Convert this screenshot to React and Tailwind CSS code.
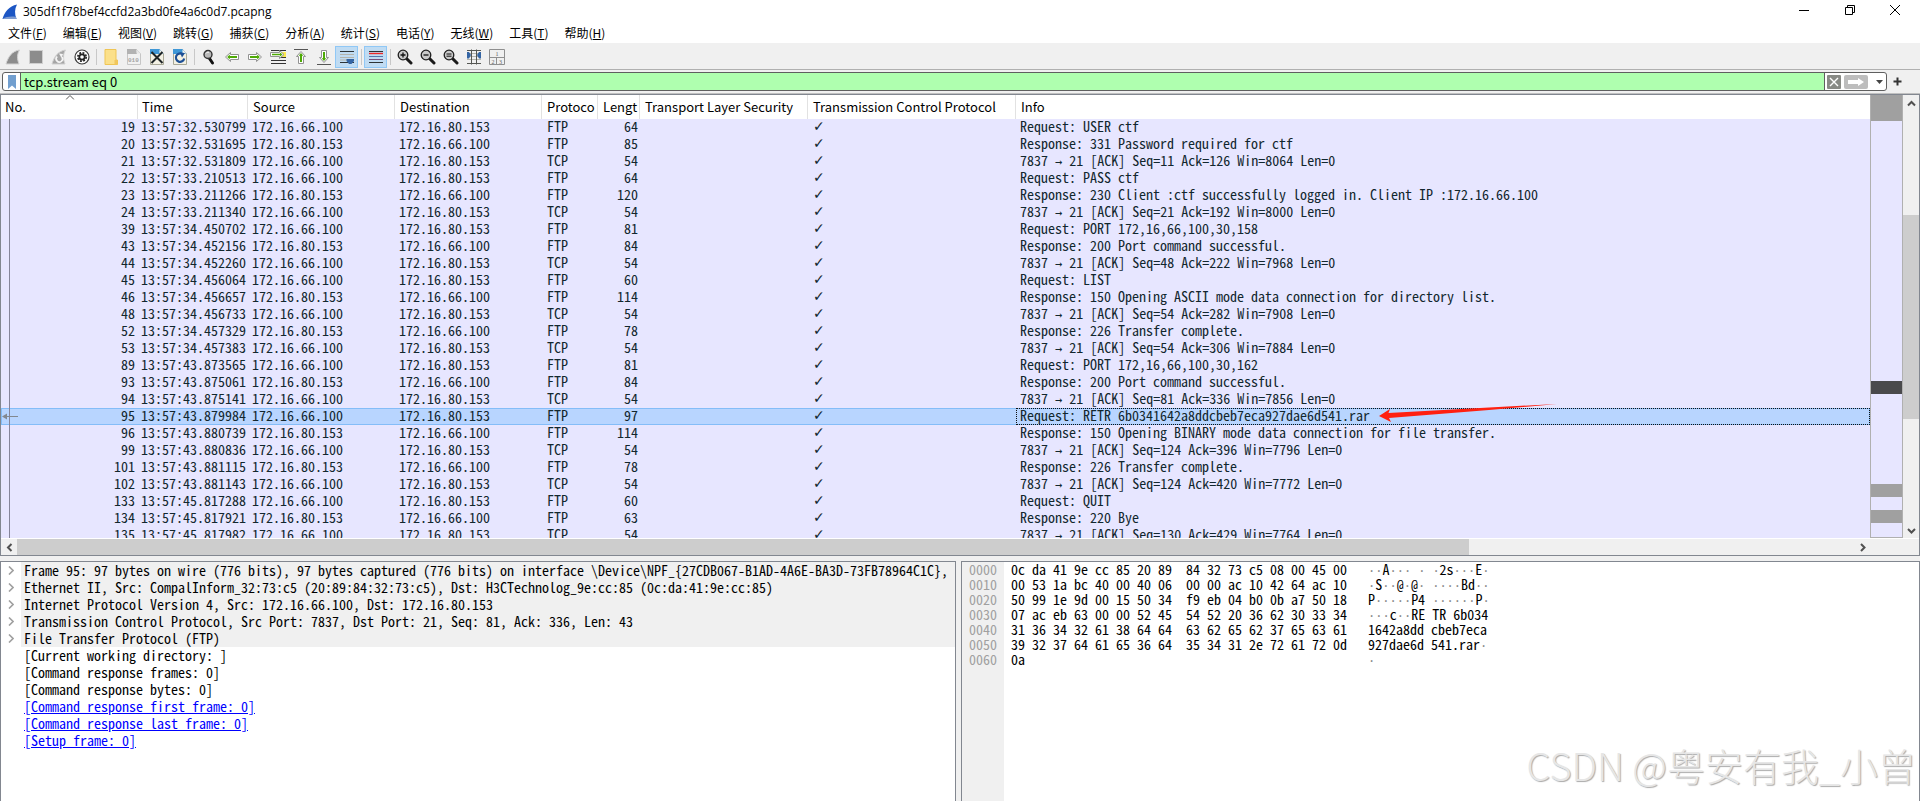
const MENUS = [
  ['文件', 'F'], ['编辑', 'E'], ['视图', 'V'], ['跳转', 'G'], ['捕获', 'C'], ['分析', 'A'],
  ['统计', 'S'], ['电话', 'Y'], ['无线', 'W'], ['工具', 'T'], ['帮助', 'H'],
]

const A = '172.16.66.100'
const B = '172.16.80.153'

// no, time, source, protocol, length, info
const PACKETS = [
  [19, '13:57:32.530799', A, 'FTP', 64, 'Request: USER ctf'],
  [20, '13:57:32.531695', B, 'FTP', 85, 'Response: 331 Password required for ctf'],
  [21, '13:57:32.531809', A, 'TCP', 54, '7837 → 21 [ACK] Seq=11 Ack=126 Win=8064 Len=0'],
  [22, '13:57:33.210513', A, 'FTP', 64, 'Request: PASS ctf'],
  [23, '13:57:33.211266', B, 'FTP', 120, 'Response: 230 Client :ctf successfully logged in. Client IP :172.16.66.100'],
  [24, '13:57:33.211340', A, 'TCP', 54, '7837 → 21 [ACK] Seq=21 Ack=192 Win=8000 Len=0'],
  [39, '13:57:34.450702', A, 'FTP', 81, 'Request: PORT 172,16,66,100,30,158'],
  [43, '13:57:34.452156', B, 'FTP', 84, 'Response: 200 Port command successful.'],
  [44, '13:57:34.452260', A, 'TCP', 54, '7837 → 21 [ACK] Seq=48 Ack=222 Win=7968 Len=0'],
  [45, '13:57:34.456064', A, 'FTP', 60, 'Request: LIST'],
  [46, '13:57:34.456657', B, 'FTP', 114, 'Response: 150 Opening ASCII mode data connection for directory list.'],
  [48, '13:57:34.456733', A, 'TCP', 54, '7837 → 21 [ACK] Seq=54 Ack=282 Win=7908 Len=0'],
  [52, '13:57:34.457329', B, 'FTP', 78, 'Response: 226 Transfer complete.'],
  [53, '13:57:34.457383', A, 'TCP', 54, '7837 → 21 [ACK] Seq=54 Ack=306 Win=7884 Len=0'],
  [89, '13:57:43.873565', A, 'FTP', 81, 'Request: PORT 172,16,66,100,30,162'],
  [93, '13:57:43.875061', B, 'FTP', 84, 'Response: 200 Port command successful.'],
  [94, '13:57:43.875141', A, 'TCP', 54, '7837 → 21 [ACK] Seq=81 Ack=336 Win=7856 Len=0'],
  [95, '13:57:43.879984', A, 'FTP', 97, 'Request: RETR 6b0341642a8ddcbeb7eca927dae6d541.rar'],
  [96, '13:57:43.880739', B, 'FTP', 114, 'Response: 150 Opening BINARY mode data connection for file transfer.'],
  [99, '13:57:43.880836', A, 'TCP', 54, '7837 → 21 [ACK] Seq=124 Ack=396 Win=7796 Len=0'],
  [101, '13:57:43.881115', B, 'FTP', 78, 'Response: 226 Transfer complete.'],
  [102, '13:57:43.881143', A, 'TCP', 54, '7837 → 21 [ACK] Seq=124 Ack=420 Win=7772 Len=0'],
  [133, '13:57:45.817288', A, 'FTP', 60, 'Request: QUIT'],
  [134, '13:57:45.817921', B, 'FTP', 63, 'Response: 220 Bye'],
  [135, '13:57:45.817982', A, 'TCP', 54, '7837 → 21 [ACK] Seq=130 Ack=429 Win=7764 Len=0'],
]
const SELECTED = 95

const LAYERS = [
  'Frame 95: 97 bytes on wire (776 bits), 97 bytes captured (776 bits) on interface \\Device\\NPF_{27CDB067-B1AD-4A6E-BA3D-73FB78964C1C},',
  'Ethernet II, Src: CompalInform_32:73:c5 (20:89:84:32:73:c5), Dst: H3CTechnolog_9e:cc:85 (0c:da:41:9e:cc:85)',
  'Internet Protocol Version 4, Src: 172.16.66.100, Dst: 172.16.80.153',
  'Transmission Control Protocol, Src Port: 7837, Dst Port: 21, Seq: 81, Ack: 336, Len: 43',
  'File Transfer Protocol (FTP)',
]
const FIELDS = ['[Current working directory: ]', '[Command response frames: 0]', '[Command response bytes: 0]']
const FRAME_LINKS = ['[Command response first frame: 0]', '[Command response last frame: 0]', '[Setup frame: 0]']

const HEX = [
  ['0000', '0c da 41 9e cc 85 20 89  84 32 73 c5 08 00 45 00', '··A··· · ·2s···E·'],
  ['0010', '00 53 1a bc 40 00 40 06  00 00 ac 10 42 64 ac 10', '·S··@·@· ····Bd··'],
  ['0020', '50 99 1e 9d 00 15 50 34  f9 eb 04 b0 0b a7 50 18', 'P·····P4 ······P·'],
  ['0030', '07 ac eb 63 00 00 52 45  54 52 20 36 62 30 33 34', '···c··RE TR 6b034'],
  ['0040', '31 36 34 32 61 38 64 64  63 62 65 62 37 65 63 61', '1642a8dd cbeb7eca'],
  ['0050', '39 32 37 64 61 65 36 64  35 34 31 2e 72 61 72 0d', '927dae6d 541.rar·'],
  ['0060', '0a', '·'],
]

const MONO =
  "whitespace-pre font-['Noto_Sans_Mono_CJK_SC','Liberation_Mono',monospace] text-[14px] leading-[17px] text-[#12272e]"

// arrows and middle dots are full width in the CJK face, so they come from a Latin one
function MonoText({ text, dim }) {
  return text.split(/([·→]+)/).map((part, i) =>
    /^[·→]/.test(part) ? (
      <span
        key={i}
        className={
          dim
            ? "font-['DejaVu_Sans_Mono',monospace] text-[12px] leading-[0] text-[#8c8c8c]"
            : "font-['DejaVu_Sans_Mono',monospace] text-[12px] leading-[0]"
        }
      >
        {part}
      </span>
    ) : part,
  )
}

function Svg({ children, w = 16 }) {
  return (
    <svg width={w} height="16" viewBox={`0 0 ${w} 16`} fill="none" aria-hidden="true">
      {children}
    </svg>
  )
}

function Lens({ children }) {
  return (
    <Svg>
      <path d="M9.5 9.5 L14 14" stroke="#1a1a1a" strokeWidth="3" strokeLinecap="round" />
      <circle cx="6" cy="6" r="4.8" fill="#c9c9c9" stroke="#1f1f1f" strokeWidth="1.3" />
      {children}
    </Svg>
  )
}

const ICONS = {
  fin: (
    <Svg>
      <path d="M1 15 C3 8 7 2 14.5 1 C12 5 12 10 14 15 Z" fill="#8c8c8c" stroke="#d2d2d2" />
    </Svg>
  ),
  stop: (
    <Svg>
      <rect x="1.5" y="1.5" width="13" height="13" fill="#8c8c8c" stroke="#cfcfcf" />
    </Svg>
  ),
  restart: (
    <Svg>
      <path d="M1 15 C3 8 7 2 14.5 1 C12 5 12 10 14 15 Z" fill="#a5a5a5" stroke="#d0d0d0" />
      <path d="M6.2 7.5 A3.2 3.2 0 1 0 11 8" stroke="#f4f4f4" strokeWidth="1.7" />
      <path d="M8 4.5 L12 5 L10.5 9 Z" fill="#f4f4f4" />
    </Svg>
  ),
  options: (
    <Svg>
      <circle cx="8" cy="8" r="7" fill="#fff" stroke="#3a3a3a" strokeWidth="1.2" />
      <circle cx="8" cy="8" r="4.2" stroke="#222" strokeWidth="1.6" strokeDasharray="1.9 1.4" />
      <circle cx="8" cy="8" r="2.7" stroke="#222" strokeWidth="1.8" />
    </Svg>
  ),
  open: (
    <Svg>
      <path d="M2 0.5 H13 V11 H14.5 V15.5 H2 Z" fill="#fbe08a" stroke="#efc555" />
      <path d="M11.5 11 H14.5 V15.5 H11.5 Z" fill="#f1c75c" />
    </Svg>
  ),
  save: (
    <Svg>
      <path d="M1.5 0.5 H10.5 L14.5 4.5 V15.5 H1.5 Z" fill="#f1f1f1" stroke="#c6c6c6" />
      <path d="M1 0 H10.5 L11 5 H1 Z" fill="#b2b2b2" />
      <path d="M10.5 0.5 V4.5 H14.5 Z" fill="#e6e6e6" />
      <text x="2" y="13" fontSize="6" fontWeight="700" fontFamily="Liberation Mono, monospace" fill="#a4a4a4">010</text>
    </Svg>
  ),
  close: (
    <Svg>
      <path d="M1.5 0.5 H10.5 L14.5 4.5 V15.5 H1.5 Z" fill="#f3f1e4" stroke="#a9a897" />
      <path d="M1 0 H10.5 L14.5 5 H1 Z" fill="#3f97d6" />
      <path d="M10.5 0.5 V4.5 H14.5 Z" fill="#f5f5ef" />
      <path d="M2.5 3 L13.5 14 M13.5 3 L2.5 14" stroke="#1e2426" strokeWidth="2" />
    </Svg>
  ),
  reload: (
    <Svg>
      <path d="M1.5 0.5 H10.5 L14.5 4.5 V15.5 H1.5 Z" fill="#f3f1e4" stroke="#a9a897" />
      <path d="M1 0 H10.5 L14.5 5 H1 Z" fill="#3f97d6" />
      <path d="M10.5 0.5 V4.5 H14.5 Z" fill="#f5f5ef" />
      <path d="M10.5 5.2 A4.2 4.2 0 1 0 12.2 9.5" stroke="#1d4f95" strokeWidth="2.2" />
      <path d="M8 3.5 L13 4 L10 8.5 Z" fill="#1d4f95" />
    </Svg>
  ),
  find: (
    <Svg>
      <path d="M8.5 9.5 L11.5 14" stroke="#111" strokeWidth="3" strokeLinecap="round" />
      <circle cx="7" cy="5.5" r="4" fill="#b9b9b9" stroke="#333" strokeWidth="1.4" />
      <path d="M5 4.5 A2.5 2.5 0 0 1 8 3.2" stroke="#fff" />
    </Svg>
  ),
  back: (
    <Svg>
      <path d="M1.5 8 L6.5 3.5 V5.5 H14.5 V10.5 H6.5 V12.5 Z" fill="#fff" stroke="#929292" strokeLinejoin="round" />
      <path d="M3.2 8 L5.8 5.6 V7 H13 V9 H5.8 V10.4 Z" fill="#4eaa06" />
    </Svg>
  ),
  forward: (
    <Svg>
      <path d="M14.5 8 L9.5 3.5 V5.5 H1.5 V10.5 H9.5 V12.5 Z" fill="#fff" stroke="#929292" strokeLinejoin="round" />
      <path d="M12.8 8 L10.2 5.6 V7 H3 V9 H10.2 V10.4 Z" fill="#4eaa06" />
    </Svg>
  ),
  goto: (
    <Svg>
      <path d="M1 1.5 H16 M1 11.5 H16 M1 14.5 H16 M10 8.5 H16" stroke="#333" />
      <rect x="11" y="3" width="5" height="5" fill="#fce94f" />
      <path d="M14 5.5 L9.5 1.5 V3.5 H0.5 V7.5 H9.5 V9.5 Z" fill="#fff" stroke="#929292" strokeLinejoin="round" />
      <path d="M12.5 5.5 L10 3.4 V4.7 H2 V6.3 H10 V7.6 Z" fill="#4eaa06" />
    </Svg>
  ),
  first: (
    <Svg>
      <path d="M1 0.5 H15" stroke="#555" />
      <path d="M8 2.5 L12.5 7.5 H10.5 V14.5 H5.5 V7.5 H3.5 Z" fill="#fff" stroke="#929292" strokeLinejoin="round" />
      <path d="M8 4 L10.4 6.8 H9 V13 H7 V6.8 H5.6 Z" fill="#4eaa06" />
    </Svg>
  ),
  last: (
    <Svg>
      <path d="M1 15.5 H15" stroke="#555" />
      <path d="M8 13.5 L12.5 8.5 H10.5 V1.5 H5.5 V8.5 H3.5 Z" fill="#fff" stroke="#929292" strokeLinejoin="round" />
      <path d="M8 12 L10.4 9.2 H9 V3 H7 V9.2 H5.6 Z" fill="#4eaa06" />
    </Svg>
  ),
  autoscroll: (
    <Svg>
      <path d="M1 2.5 H15 M1 13.5 H15" stroke="#2e3436" />
      <path d="M1 5.5 H15 M1 8.5 H15 M1 11 H15" stroke="#b4b4ac" />
      <path d="M7.5 10 H15 V12 L12.5 15 H10 L7.5 12 Z" fill="#3465a4" />
    </Svg>
  ),
  colorize: (
    <Svg>
      <path d="M1 2.5 H15 M1 13.5 H15" stroke="#2e3436" />
      <path d="M1 4.5 H15" stroke="#ef2929" strokeWidth="1.4" />
      <path d="M1 7.5 H15" stroke="#5477ad" />
      <path d="M1 10.5 H15" stroke="#75507b" />
    </Svg>
  ),
  zoomIn: <Lens><path d="M3.5 6 H8.5 M6 3.5 V8.5" stroke="#111" strokeWidth="1.3" /></Lens>,
  zoomOut: <Lens><path d="M3.5 6 H8.5" stroke="#111" strokeWidth="1.3" /></Lens>,
  zoomReset: <Lens><path d="M3.5 5 H8.5 M3.5 7.2 H8.5" stroke="#111" /></Lens>,
  resize: (
    <Svg>
      <path d="M1 1.5 H15 M1 14.5 H15" stroke="#555753" />
      <path d="M1 4.5 H15 M1 7.5 H15 M1 10.5 H15" stroke="#b4b4ac" />
      <path d="M5.5 0.5 V15.5 M10.5 0.5 V15.5" stroke="#555753" />
      <path d="M1 3 H3 L5 6 L3 9.5 H1 Z M15 3 H13 L11 6 L13 9.5 H15 Z" fill="#3465a4" />
    </Svg>
  ),
  layout: (
    <Svg>
      <path d="M0.5 0.5 H15.5 V15.5 H0.5 Z M0.5 8.5 H15.5 M7.5 8.5 V15.5" stroke="#8f8f8f" />
      <g fontSize="6" fontFamily="Liberation Serif, serif" fill="#666">
        <text x="6.5" y="6.5">1</text>
        <text x="2.5" y="14.5">2</text>
        <text x="10" y="14.5">3</text>
      </g>
    </Svg>
  ),
}

const TOOLS = [
  ['fin', '开始捕获'], ['stop', '停止捕获'], ['restart', '重新开始捕获'], ['options', '捕获选项'], null,
  ['open', '打开'], ['save', '保存'], ['close', '关闭'], ['reload', '重新加载'], null,
  ['find', '查找分组'], ['back', '上一分组'], ['forward', '下一分组'], ['goto', '转到分组'],
  ['first', '首个分组'], ['last', '最新分组'], ['autoscroll', '自动滚动', true], null,
  ['colorize', '着色', true], null,
  ['zoomIn', '放大'], ['zoomOut', '缩小'], ['zoomReset', '普通大小'], ['resize', '调整列宽'], ['layout', '布局'],
]

function TitleBar() {
  return (
    <header className="flex h-[22px] shrink-0 items-center bg-white pb-0.5 pl-0.5 pr-0.5">
      <svg width="16" height="16" viewBox="0 0 16 16" className="mt-1" aria-hidden="true">
        <path d="M0.5 15 C2.5 8 7 2 15 0.5 C12.5 5 12.5 10 14.5 15 Z" fill="#1c56c4" />
        <path d="M0.5 15 C4 12.5 10 12 14 13 L14.5 15 Z" fill="#7f9cd0" />
      </svg>
      <h1 className="ml-[5px] mt-1 font-['Open_Sans',sans-serif] text-[12px] leading-4">
        305df1f78bef4ccfd2a3bd0fe4a6c0d7.pcapng
      </h1>
      <div className="ml-auto flex">
        <button aria-label="最小化" className="flex w-[46px] justify-center">
          <svg width="10" height="10"><path d="M0 5.5 H10" stroke="#000" /></svg>
        </button>
        <button aria-label="还原" className="flex w-[45px] justify-center">
          <svg width="10" height="10" fill="none" stroke="#000">
            <path d="M0.5 2.5 H7.5 V9.5 H0.5 Z M2.5 2.5 V0.5 H9.5 V7.5 H7.5" />
          </svg>
        </button>
        <button aria-label="关闭窗口" className="flex w-[46px] justify-center">
          <svg width="10" height="10" stroke="#000"><path d="M0 0 L10 10 M10 0 L0 10" /></svg>
        </button>
      </div>
    </header>
  )
}

function MenuBar() {
  return (
    <nav className="flex h-[22px] shrink-0 items-center gap-4 border-b border-[#f0f0f0] bg-white pl-2">
      {MENUS.map(([label, key]) => (
        <button key={key} className="whitespace-nowrap text-[12px] leading-[18px]">
          {label}(<u>{key}</u>)
        </button>
      ))}
    </nav>
  )
}

function Toolbar() {
  return (
    <div className="flex h-[26px] shrink-0 items-center border-b border-[#b0b0b0] bg-[#f0f0f0] pl-px">
      {TOOLS.map((tool, i) =>
        tool ? (
          <button
            key={tool[0]}
            aria-label={tool[1]}
            className={
              tool[2]
                ? 'flex h-[22px] w-[23px] items-center justify-center border border-[#90c8f6] bg-[#c0dcf3]'
                : 'flex h-[22px] w-[23px] items-center justify-center'
            }
          >
            {ICONS[tool[0]]}
          </button>
        ) : (
          <span key={i} className="flex w-1.5 justify-center">
            <span className="h-4 w-px bg-[#c8c8c8]" />
          </span>
        ),
      )}
    </div>
  )
}

function FilterBar() {
  return (
    <div className="flex h-6 shrink-0 items-center border-b border-[#c0c0c0] bg-[#f0f0f0] pl-0.5 pr-[18px]">
      <div className="flex h-[19px] flex-1 overflow-hidden rounded-[3px] border border-[#5f5f5f] bg-white">
        <button aria-label="书签" className="flex w-[18px] items-center justify-center border-r border-[#5f5f5f]">
          <svg width="8" height="14"><path d="M0 0 H8 V14 L4 10.5 L0 14 Z" fill="#729fcf" /></svg>
        </button>
        <input
          aria-label="显示过滤器"
          defaultValue="tcp.stream eq 0"
          className="min-w-0 flex-1 bg-[#afffaf] pl-[3px] text-[13px] leading-4 outline-none"
        />
        <div className="flex w-[62px] items-center border-l border-[#5f5f5f] pl-0.5">
          <button aria-label="清除" className="flex h-3.5 w-3.5 items-center justify-center rounded-[1px] bg-[#888a85]">
            <svg width="10" height="10" stroke="#fff" strokeWidth="1.4"><path d="M1 1 L9 9 M9 1 L1 9" /></svg>
          </button>
          <button aria-label="应用" className="ml-[3px] flex h-3.5 w-6 items-center justify-center rounded-[2px] bg-[#bdbdbd]">
            <svg width="16" height="8"><path d="M0 2 H10 V0 L16 4 L10 8 V6 H0 Z" fill="#fff" /></svg>
          </button>
          <button aria-label="历史" className="ml-2">
            <svg width="7" height="4"><path d="M0 0 H7 L3.5 4 Z" fill="#444" /></svg>
          </button>
        </div>
      </div>
      <button aria-label="添加" className="ml-1.5">
        <svg width="9" height="9" stroke="#333" strokeWidth="2"><path d="M4.5 0.5 V8.5 M0.5 4.5 H8.5" /></svg>
      </button>
    </div>
  )
}

const HEADS = ['No.', 'Time', 'Source', 'Destination', 'Protoco', 'Lengt', 'Transport Layer Security', 'Transmission Control Protocol', 'Info']

function PacketTable() {
  return (
    <table className="w-full table-fixed border-collapse">
      <colgroup>
        <col className="w-[137px]" />
        <col className="w-[110px]" />
        <col className="w-[147px]" />
        <col className="w-[147px]" />
        <col className="w-[56px]" />
        <col className="w-[42px]" />
        <col className="w-[168px]" />
        <col className="w-[208px]" />
        <col />
      </colgroup>
      <thead>
        <tr className="h-6 bg-white text-left text-[13px]">
          {HEADS.map((h, i) => (
            <th
              key={h}
              scope="col"
              className={
                i < 2
                  ? 'relative whitespace-nowrap p-0 pl-1 font-normal leading-5'
                  : 'relative whitespace-nowrap p-0 pl-[5px] font-normal leading-5'
              }
            >
              {i === 0 && (
                <svg width="9" height="5" className="absolute left-1/2 top-0 -translate-x-1/2" fill="none" stroke="#555">
                  <path d="M0.5 4.5 L4.5 0.5 L8.5 4.5" />
                </svg>
              )}
              {h}
              {i < 8 && <span className="absolute inset-y-0 right-0 w-px bg-[#e2e2e2]" />}
            </th>
          ))}
        </tr>
      </thead>
      <tbody className={`${MONO} [&_td]:pb-0.5 [&_td]:leading-[15px]`}>
        {PACKETS.map(([no, time, src, proto, len, info]) => {
          const sel = no === SELECTED
          return (
            <tr key={no} className={sel ? 'h-[17px] bg-[#b8d5ff] outline outline-1 -outline-offset-1 outline-[#84bdf8]' : 'h-[17px]'}>
              <td className="relative p-0 pr-[3px] text-right">
                <span className="absolute inset-y-0 left-2 w-px bg-[#85859a]" />
                {sel && (
                  <svg width="16" height="7" className="absolute left-px top-[5px]" aria-hidden="true">
                    <path d="M0 3.5 L5 0.5 V6.5 Z" fill="#82888f" />
                    <path d="M3 3.5 H16" stroke="#82888f" />
                  </svg>
                )}
                {no}
              </td>
              <td className="p-0 pl-[3px]">{time}</td>
              <td className="p-0 pl-1">{src}</td>
              <td className="p-0 pl-1">{src === A ? B : A}</td>
              <td className="p-0 pl-[5px]">{proto}</td>
              <td className="p-0 pr-0.5 text-right">{len}</td>
              <td className="p-0" />
              <td className="p-0 pl-[5px] font-['DejaVu_Sans',sans-serif] text-[14px] font-bold">✓</td>
              <td className={sel ? 'relative p-0 pl-1 outline-dotted outline-1 -outline-offset-1 outline-[#111]' : 'p-0 pl-1'}>
                <MonoText text={info} />
                {sel && (
                  <svg width="178" height="20" className="absolute -top-1 left-[363px]" aria-hidden="true">
                    <path d="M0 12 L11 5 L9.5 9 L110 3.5 L178 0 L110 6 L10 14 L12 18 Z" fill="#ff2010" />
                  </svg>
                )}
              </td>
            </tr>
          )
        })}
      </tbody>
    </table>
  )
}

// share of the capture that each band covers
const BANDS = [
  [26, 'bg-[#a0a0a0]'], [260, ''], [13, 'bg-[#4a4a4c]'], [91, ''],
  [13, 'bg-[#a0a0a0]'], [13, ''], [13, 'bg-[#a0a0a0]'], [14, ''],
]

function Minimap() {
  return (
    <div className="flex w-[33px] shrink-0 flex-col border-x border-b border-[#b0b0b0] bg-[#e7e6ff]">
      {BANDS.map(([share, color], i) => (
        <div key={i} className={color} style={{ flex: `${share} 1 0%` }} />
      ))}
    </div>
  )
}

function Chevron({ d, label }) {
  return (
    <button aria-label={label} className="flex h-4 w-4 shrink-0 items-center justify-center">
      <svg width="9" height="9" fill="none" stroke="#505050" strokeWidth="2"><path d={d} /></svg>
    </button>
  )
}

function PacketList() {
  return (
    <section className="flex min-h-0 flex-[461_1_0%] flex-col border border-[#828790] bg-[#f0f0f0]">
      <div className="flex min-h-0 flex-1">
        <div className="min-w-0 flex-1 overflow-hidden bg-[#e7e6ff]">
          <PacketTable />
        </div>
        <Minimap />
        <div className="flex w-4 shrink-0 flex-col">
          <Chevron label="向上滚动" d="M1 6.5 L4.5 3 L8 6.5" />
          <div className="flex-[104_1_0%]" />
          <div className="flex-[204_1_0%] bg-[#cdcdcd]" />
          <div className="flex-[103_1_0%]" />
          <Chevron label="向下滚动" d="M1 3 L4.5 6.5 L8 3" />
        </div>
      </div>
      <div className="flex h-[17px] shrink-0 border-t border-white pr-[49px]">
        <Chevron label="向左滚动" d="M6.5 1 L3 4.5 L6.5 8" />
        <div className="flex-[1451_1_0%] bg-[#cdcdcd]" />
        <div className="flex-[385_1_0%]" />
        <Chevron label="向右滚动" d="M3 1 L6.5 4.5 L3 8" />
      </div>
    </section>
  )
}

function DetailsPane() {
  return (
    <section className="min-w-0 flex-[956_1_0%] overflow-hidden border border-b-0 border-[#828790] bg-white">
      <ul className={MONO}>
        {LAYERS.map((text) => (
          <li key={text} className="flex text-black">
            <button aria-label="展开" className="flex w-5 shrink-0 items-center justify-center">
              <svg width="6" height="9" fill="none" stroke="#a0a0a0" strokeWidth="1.6"><path d="M1 0.5 L5 4.5 L1 8.5" /></svg>
            </button>
            <span className="min-w-0 flex-1 bg-[#f0f0f0] pl-[3px]">{text}</span>
          </li>
        ))}
        {FIELDS.map((text) => (
          <li key={text} className="pl-[23px] text-black">{text}</li>
        ))}
        {FRAME_LINKS.map((text) => (
          <li key={text} className="pl-[23px]">
            <a href="#frame" className="text-[#0000ff] underline">{text}</a>
          </li>
        ))}
      </ul>
    </section>
  )
}

function BytesPane() {
  return (
    <section className="flex min-w-0 flex-[959_1_0%] overflow-hidden whitespace-pre border border-b-0 border-[#828790] bg-white font-['Noto_Sans_Mono_CJK_SC','Liberation_Mono',monospace] text-[14px] leading-[15px] text-black">
      <div className="w-[42px] shrink-0 bg-[#f0f0f0] pl-[7px] text-[#a0a0a0]">
        {HEX.map(([off]) => <div key={off}>{off}</div>)}
      </div>
      <div className="w-[364px] shrink-0 pl-[7px]">
        {HEX.map(([off, bytes]) => <div key={off}>{bytes}</div>)}
      </div>
      <div>
        {HEX.map(([off, , ascii]) => (
          <div key={off}><MonoText text={ascii} dim /></div>
        ))}
      </div>
    </section>
  )
}

export default function App() {
  return (
    <div className="relative flex h-screen flex-col overflow-hidden bg-[#f0f0f0] font-['Noto_Sans_CJK_SC',sans-serif] text-black">
      <TitleBar />
      <MenuBar />
      <Toolbar />
      <FilterBar />
      <PacketList />
      <div className="mt-[5px] flex min-h-0 flex-[240_1_0%] gap-[5px]">
        <DetailsPane />
        <BytesPane />
      </div>
      <div className="pointer-events-none absolute bottom-3 right-1 whitespace-nowrap text-[38px] font-light leading-[48px] text-[#e6e6e6] [text-shadow:1px_1px_1px_#aaa]">
        CSDN @粤安有我_小曾
      </div>
    </div>
  )
}
